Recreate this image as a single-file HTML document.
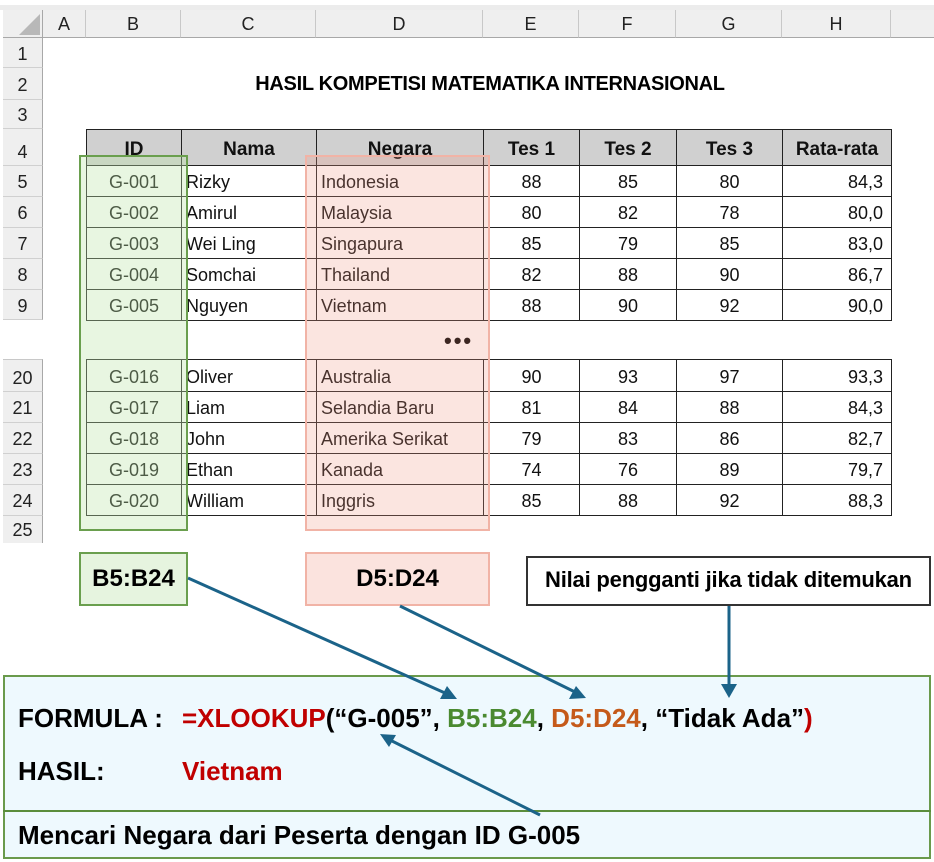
<!DOCTYPE html>
<html><head><meta charset="utf-8"><style>
body{margin:0;width:934px;height:862px;background:#fff;position:relative;overflow:hidden;font-family:"Liberation Sans",Arial,sans-serif;}
div,span{box-sizing:border-box;}
.a{position:absolute;}
.ch{position:absolute;top:10px;height:28px;background:#efefef;border-right:1px solid #c8c8c8;border-bottom:1px solid #a8a8a8;text-align:center;font-size:18px;line-height:28px;color:#222;}
.rh{position:absolute;left:3px;width:40px;background:#efefef;border-bottom:1px solid #d0d0d0;border-right:1px solid #a8a8a8;text-align:center;font-size:18px;color:#222;}
.r{position:absolute;left:86px;width:806px;}
.c{position:absolute;top:0;height:100%;border-left:1px solid #222;border-bottom:1px solid #222;font-size:18px;padding:0 4px;white-space:nowrap;color:#111;}
.c:last-child{border-right:1px solid #222;}
.ct{text-align:center}.rt{text-align:right;padding-right:8px}
.hd .c{background:#d0d0d0;font-weight:bold;text-align:center;border-top:1px solid #222;font-size:19px;}
.big{font-weight:bold;font-size:26px;line-height:30px;white-space:nowrap}
</style></head><body>
<div class="a" style="left:0;top:5px;width:934px;height:5px;background:#ececec"></div>
<div class="a" style="left:3px;top:10px;width:40px;height:28px;background:#efefef;border-right:1px solid #a8a8a8;border-bottom:1px solid #a8a8a8"></div>
<svg class="a" style="left:18px;top:12px" width="24" height="24"><polygon points="22,2 22,23 1,23" fill="#b8b8b8"/></svg>
<div class="ch" style="left:43px;width:43px">A</div>
<div class="ch" style="left:86px;width:95px">B</div>
<div class="ch" style="left:181px;width:135px">C</div>
<div class="ch" style="left:316px;width:167px">D</div>
<div class="ch" style="left:483px;width:96px">E</div>
<div class="ch" style="left:579px;width:97px">F</div>
<div class="ch" style="left:676px;width:106px">G</div>
<div class="ch" style="left:782px;width:109px">H</div>
<div class="ch" style="left:891px;width:43px;border-right:none"></div>

<div class="rh" style="top:38px;height:30px;line-height:32px">1</div>
<div class="rh" style="top:68px;height:32px;line-height:34px">2</div>
<div class="rh" style="top:100px;height:29px;line-height:31px">3</div>
<div class="rh" style="top:129px;height:37px;line-height:46px">4</div>
<div class="rh" style="top:166px;height:31px;line-height:33px">5</div>
<div class="rh" style="top:197px;height:31px;line-height:33px">6</div>
<div class="rh" style="top:228px;height:31px;line-height:33px">7</div>
<div class="rh" style="top:259px;height:31px;line-height:33px">8</div>
<div class="rh" style="top:290px;height:30px;line-height:32px">9</div>
<div class="rh" style="top:359px;height:33px;line-height:37px;border-top:1px solid #c8c8c8">20</div>
<div class="rh" style="top:392px;height:31px;line-height:33px">21</div>
<div class="rh" style="top:423px;height:31px;line-height:33px">22</div>
<div class="rh" style="top:454px;height:31px;line-height:33px">23</div>
<div class="rh" style="top:485px;height:31px;line-height:33px">24</div>
<div class="rh" style="top:516px;height:27px;line-height:29px;border-bottom:none">25</div>

<div class="a" style="left:240px;top:71px;width:500px;text-align:center;font-weight:bold;font-size:20px;letter-spacing:-0.3px;line-height:26px">HASIL KOMPETISI MATEMATIKA INTERNASIONAL</div>

<div class="r hd" style="top:129px;height:37px;line-height:40px">
<div class="c" style="left:0;width:95px">ID</div><div class="c" style="left:95px;width:135px">Nama</div><div class="c" style="left:230px;width:167px">Negara</div><div class="c" style="left:397px;width:96px">Tes 1</div><div class="c" style="left:493px;width:97px">Tes 2</div><div class="c" style="left:590px;width:106px">Tes 3</div><div class="c" style="left:696px;width:110px">Rata-rata</div></div>

<div class="r" style="top:166px;height:31px;line-height:32px"><div class="c ct" style="left:0;width:95px">G-001</div><div class="c" style="left:95px;width:135px">Rizky</div><div class="c" style="left:230px;width:167px">Indonesia</div><div class="c ct" style="left:397px;width:96px">88</div><div class="c ct" style="left:493px;width:97px">85</div><div class="c ct" style="left:590px;width:106px">80</div><div class="c rt" style="left:696px;width:110px">84,3</div></div>
<div class="r" style="top:197px;height:31px;line-height:32px"><div class="c ct" style="left:0;width:95px">G-002</div><div class="c" style="left:95px;width:135px">Amirul</div><div class="c" style="left:230px;width:167px">Malaysia</div><div class="c ct" style="left:397px;width:96px">80</div><div class="c ct" style="left:493px;width:97px">82</div><div class="c ct" style="left:590px;width:106px">78</div><div class="c rt" style="left:696px;width:110px">80,0</div></div>
<div class="r" style="top:228px;height:31px;line-height:32px"><div class="c ct" style="left:0;width:95px">G-003</div><div class="c" style="left:95px;width:135px">Wei Ling</div><div class="c" style="left:230px;width:167px">Singapura</div><div class="c ct" style="left:397px;width:96px">85</div><div class="c ct" style="left:493px;width:97px">79</div><div class="c ct" style="left:590px;width:106px">85</div><div class="c rt" style="left:696px;width:110px">83,0</div></div>
<div class="r" style="top:259px;height:31px;line-height:32px"><div class="c ct" style="left:0;width:95px">G-004</div><div class="c" style="left:95px;width:135px">Somchai</div><div class="c" style="left:230px;width:167px">Thailand</div><div class="c ct" style="left:397px;width:96px">82</div><div class="c ct" style="left:493px;width:97px">88</div><div class="c ct" style="left:590px;width:106px">90</div><div class="c rt" style="left:696px;width:110px">86,7</div></div>
<div class="r" style="top:290px;height:31px;line-height:32px"><div class="c ct" style="left:0;width:95px">G-005</div><div class="c" style="left:95px;width:135px">Nguyen</div><div class="c" style="left:230px;width:167px">Vietnam</div><div class="c ct" style="left:397px;width:96px">88</div><div class="c ct" style="left:493px;width:97px">90</div><div class="c ct" style="left:590px;width:106px">92</div><div class="c rt" style="left:696px;width:110px">90,0</div></div>
<div class="a" style="left:444px;top:328px;font-size:22px;font-weight:bold;letter-spacing:2px">•••</div>
<div class="a" style="left:86px;top:359px;width:806px;border-top:1px solid #222"></div>
<div class="r" style="top:360px;height:32px;line-height:34px"><div class="c ct" style="left:0;width:95px">G-016</div><div class="c" style="left:95px;width:135px">Oliver</div><div class="c" style="left:230px;width:167px">Australia</div><div class="c ct" style="left:397px;width:96px">90</div><div class="c ct" style="left:493px;width:97px">93</div><div class="c ct" style="left:590px;width:106px">97</div><div class="c rt" style="left:696px;width:110px">93,3</div></div>
<div class="r" style="top:392px;height:31px;line-height:32px"><div class="c ct" style="left:0;width:95px">G-017</div><div class="c" style="left:95px;width:135px">Liam</div><div class="c" style="left:230px;width:167px">Selandia Baru</div><div class="c ct" style="left:397px;width:96px">81</div><div class="c ct" style="left:493px;width:97px">84</div><div class="c ct" style="left:590px;width:106px">88</div><div class="c rt" style="left:696px;width:110px">84,3</div></div>
<div class="r" style="top:423px;height:31px;line-height:32px"><div class="c ct" style="left:0;width:95px">G-018</div><div class="c" style="left:95px;width:135px">John</div><div class="c" style="left:230px;width:167px">Amerika Serikat</div><div class="c ct" style="left:397px;width:96px">79</div><div class="c ct" style="left:493px;width:97px">83</div><div class="c ct" style="left:590px;width:106px">86</div><div class="c rt" style="left:696px;width:110px">82,7</div></div>
<div class="r" style="top:454px;height:31px;line-height:32px"><div class="c ct" style="left:0;width:95px">G-019</div><div class="c" style="left:95px;width:135px">Ethan</div><div class="c" style="left:230px;width:167px">Kanada</div><div class="c ct" style="left:397px;width:96px">74</div><div class="c ct" style="left:493px;width:97px">76</div><div class="c ct" style="left:590px;width:106px">89</div><div class="c rt" style="left:696px;width:110px">79,7</div></div>
<div class="r" style="top:485px;height:31px;line-height:32px"><div class="c ct" style="left:0;width:95px">G-020</div><div class="c" style="left:95px;width:135px">William</div><div class="c" style="left:230px;width:167px">Inggris</div><div class="c ct" style="left:397px;width:96px">85</div><div class="c ct" style="left:493px;width:97px">88</div><div class="c ct" style="left:590px;width:106px">92</div><div class="c rt" style="left:696px;width:110px">88,3</div></div>

<div class="a" style="left:79px;top:155px;width:109px;height:376px;background:rgba(190,230,170,0.35);border:2px solid #6a9f4e"></div>
<div class="a" style="left:305px;top:155px;width:185px;height:376px;background:rgba(240,150,130,0.25);border:2px solid #f1b3a6"></div>

<div class="a" style="left:79px;top:552px;width:109px;height:54px;background:#e6f4df;border:2px solid #6a9f4e;text-align:center;line-height:50px;font-weight:bold;font-size:24px">B5:B24</div>
<div class="a" style="left:305px;top:552px;width:185px;height:54px;background:#fbe3de;border:2px solid #f1b3a6;text-align:center;line-height:50px;font-weight:bold;font-size:24px">D5:D24</div>
<div class="a" style="left:526px;top:556px;width:405px;height:50px;border:2px solid #333;text-align:center;line-height:44px;font-weight:bold;font-size:22px;white-space:nowrap;letter-spacing:-0.2px">Nilai pengganti jika tidak ditemukan</div>

<div class="a" style="left:3px;top:675px;width:928px;height:184px;background:#eef9fe;border:2px solid #6a9a4c"></div>
<div class="a" style="left:3px;top:810px;width:928px;border-top:2px solid #5a8d3c"></div>
<div class="a big" style="left:18px;top:703px">FORMULA :</div>
<div class="a big" style="left:182px;top:703px"><span style="color:#c00000">=XLOOKUP</span>(“G-005”, <span style="color:#4a8a30">B5:B24</span>, <span style="color:#c55a1a">D5:D24</span>, “Tidak Ada”<span style="color:#c00000">)</span></div>
<div class="a big" style="left:18px;top:756px">HASIL:</div>
<div class="a big" style="left:182px;top:756px;color:#c00000">Vietnam</div>
<div class="a big" style="left:18px;top:820px">Mencari Negara dari Peserta dengan ID G-005</div>

<svg class="a" style="left:0;top:0" width="934" height="862">
<g stroke="#1b6389" stroke-width="3" fill="none">
<line x1="188" y1="578" x2="445" y2="693"/>
<line x1="400" y1="606" x2="575" y2="692"/>
<line x1="729" y1="606" x2="729" y2="688"/>
<line x1="540" y1="815" x2="390" y2="740"/>
</g>
<g fill="#1b6389">
<polygon points="457,699 440,699 447,686"/>
<polygon points="586,698 569,699 576,686"/>
<polygon points="729,698 721,684 737,684"/>
<polygon points="380,734 396,735 389,747"/>
</g>
</svg>
</body></html>
